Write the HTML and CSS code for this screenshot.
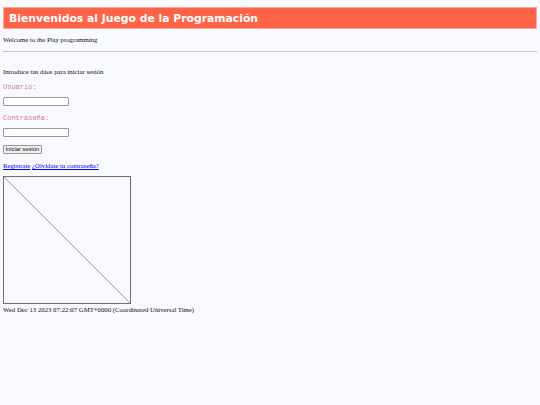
FILE: index.html
```html
<!DOCTYPE html>
<html lang="es">
<head>
<meta charset="utf-8">
<title>Juego de la Programación</title>
<link rel="stylesheet" href="styles.css">
</head>
<body>
<h1 class="title">Bienvenidos al Juego de la Programación</h1>
<p class="intro">Welcome to the Play programming</p>
<hr class="rule">
<p class="lead">Introduce tus daos para iniciar sesión</p>
<form class="login">
  <label class="label">Usuario:</label>
  <input class="field" type="text">
  <label class="label">Contraseña:</label>
  <input class="field" type="password">
  <button class="btn" type="button">Iniciar sesión</button>
</form>
<p class="links"><a href="#">Registrate</a> <a href="#">¿Olvidate tu contraseña?</a></p>
<svg class="board" width="128" height="128" viewBox="0 0 128 128">
  <rect x="0.5" y="0.5" width="127" height="127" fill="none" stroke="#707070" stroke-width="1"/>
  <line x1="1" y1="1" x2="127" y2="127" stroke="#a0a0a0" stroke-width="1"/>
</svg>
<p class="date">Wed Dec 13 2023 07:22:07 GMT+0000 (Coordinated Universal Time)</p>
</body>
</html>
```
FILE: styles.css
```css
html, body {
  margin: 0;
  padding: 0;
  background: #f8f8ff;
}
body {
  padding: 7px 3px 0 3px;
  font-family: "Liberation Serif", serif;
  font-size: 6.75px;
  color: #111;
}
.title {
  margin: 0;
  height: 20px;
  line-height: 21px;
  padding: 0 5px;
  background: #ff6347;
  border: 1px solid #f6a89a;
  color: #fff;
  font-family: "DejaVu Sans", sans-serif;
  font-weight: bold;
  font-size: 10.8px;
}
.intro {
  margin: 6px 0 0 0;
  line-height: 10px;
}
.rule {
  margin: 6px 0 0 0;
  border: 0;
  border-top: 1px solid #c8c8c8;
  height: 0;
}
.lead {
  margin: 15px 0 0 0;
  line-height: 10px;
}
.login {
  display: flex;
  flex-direction: column;
  align-items: flex-start;
}
.label {
  margin-top: 5px;
  line-height: 10px;
  font-family: "Liberation Mono", monospace;
  font-size: 7px;
  color: #d9789c;
}
.field {
  margin-top: 5px;
  width: 66px;
  height: 9px;
  box-sizing: border-box;
  padding: 0;
  border: 1px solid #999;
  border-radius: 1px;
  background: #fff;
}
.field + .label {
  margin-top: 7px;
}
.btn {
  margin-top: 8px;
  height: 9px;
  padding: 0 1.5px;
  box-sizing: border-box;
  font-family: "Liberation Sans", sans-serif;
  font-size: 5.8px;
  line-height: 7px;
  background: #efefef;
  border: 1px solid #999;
  border-radius: 1px;
  color: #111;
}
.links {
  margin: 7px 0 0 0;
  line-height: 10px;
}
.links a {
  color: #0000ee;
}
.board {
  display: block;
  margin-top: 5px;
}
.date {
  margin: 1px 0 0 0;
  line-height: 10px;
}
```
